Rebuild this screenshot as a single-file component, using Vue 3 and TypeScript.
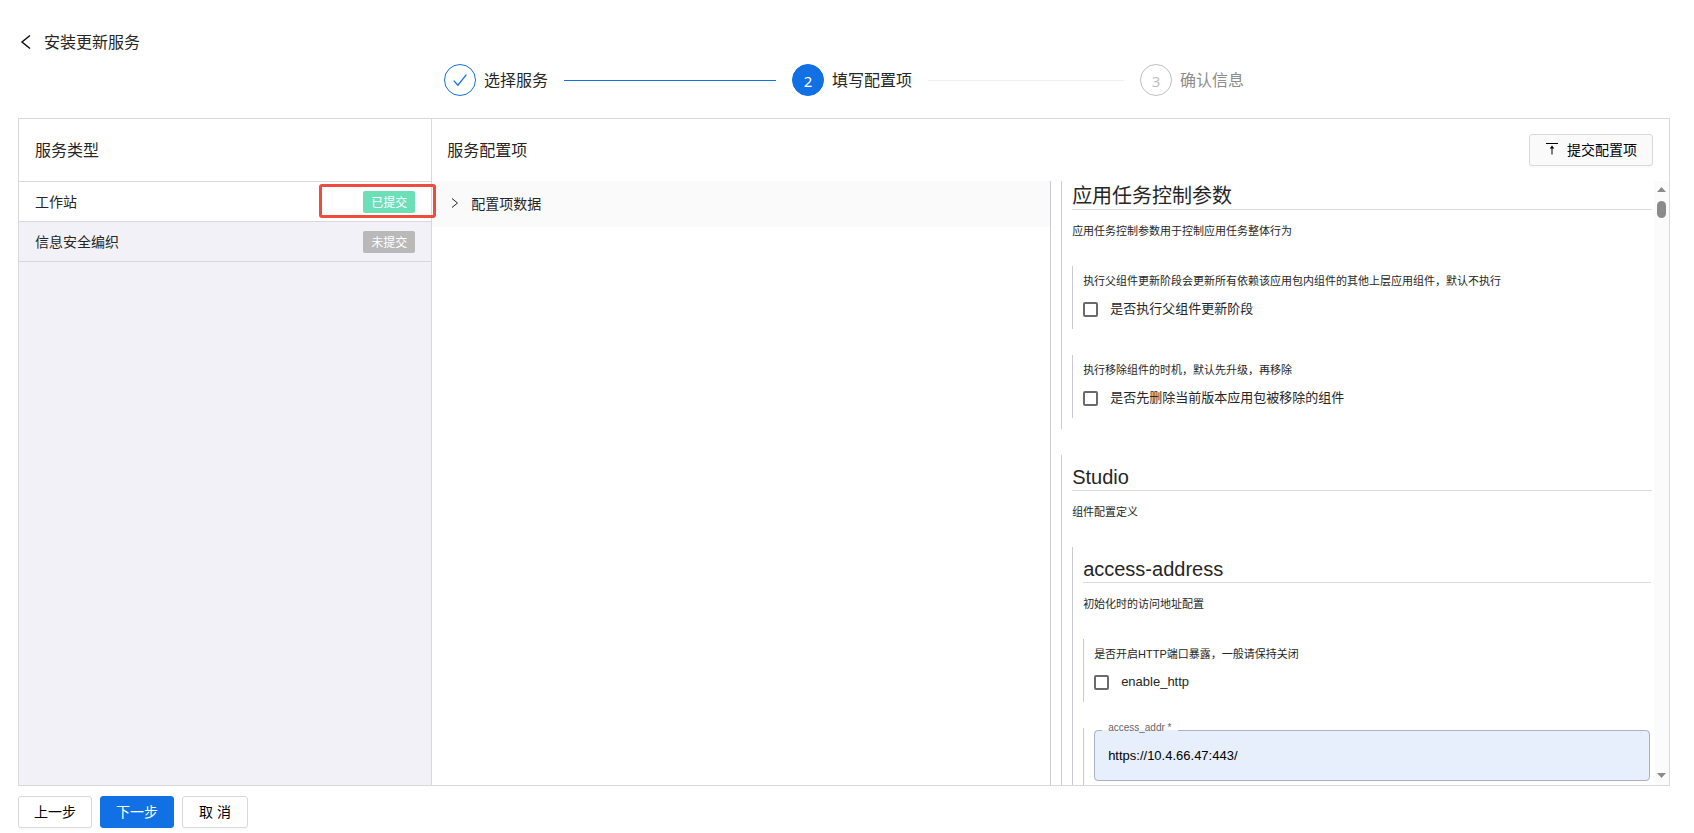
<script setup lang="ts">
import { ref } from 'vue'

type StepState = 'done' | 'active' | 'wait'

interface Step {
  title: string
  state: StepState
}

interface Service {
  name: string
  submitted: boolean
}

interface Toggle {
  id: string
  hint: string
  label: string
  checked: boolean
}

const steps: Step[] = [
  { title: '选择服务', state: 'done' },
  { title: '填写配置项', state: 'active' },
  { title: '确认信息', state: 'wait' },
]

const services: Service[] = [
  { name: '工作站', submitted: true },
  { name: '信息安全编织', submitted: false },
]

const current = ref(0)

const toggles = ref<Toggle[]>([
  {
    id: 'update-parent',
    hint: '执行父组件更新阶段会更新所有依赖该应用包内组件的其他上层应用组件，默认不执行',
    label: '是否执行父组件更新阶段',
    checked: false,
  },
  {
    id: 'remove-first',
    hint: '执行移除组件的时机，默认先升级，再移除',
    label: '是否先删除当前版本应用包被移除的组件',
    checked: false,
  },
])

const enableHttp = ref(false)
const accessAddr = ref('https://10.4.66.47:443/')
</script>

<template>
  <div class="page">
    <header class="page-head">
      <button class="back" type="button" aria-label="返回">
        <svg width="12" height="16" viewBox="0 0 12 16"><path d="M10 1.5 2 8l8 6.5" /></svg>
      </button>
      <h1>安装更新服务</h1>
    </header>

    <ol class="steps">
      <li v-for="(step, i) in steps" :key="step.title" class="step" :class="step.state">
        <span class="step-icon">
          <svg v-if="step.state === 'done'" width="16" height="16" viewBox="0 0 16 16">
            <path d="M1.7 8.6 5.9 13.2 14.4 2.6" />
          </svg>
          <template v-else>{{ i + 1 }}</template>
        </span>
        <span class="step-title">{{ step.title }}</span>
        <span v-if="i < steps.length - 1" class="step-line"></span>
      </li>
    </ol>

    <main class="panel">
      <aside class="side">
        <div class="side-head"><h2>服务类型</h2></div>
        <button
          v-for="(service, i) in services"
          :key="service.name"
          class="service"
          :class="{ selected: i === current }"
          type="button"
          @click="current = i"
        >
          <span class="service-name">{{ service.name }}</span>
          <span class="tag" :class="{ ok: service.submitted }">{{ service.submitted ? '已提交' : '未提交' }}</span>
          <span v-if="service.submitted" class="mark"></span>
        </button>
      </aside>

      <section class="config">
        <div class="config-head">
          <h2>服务配置项</h2>
          <button class="btn submit" type="button">
            <svg width="14" height="14" viewBox="0 -1 14 14">
              <path class="bar" d="M1 0.5h12" />
              <path class="stem" d="M7 4v7.5" />
              <path class="tip" d="M7 2.5 9.3 5.5H4.7z" />
            </svg>
            提交配置项
          </button>
        </div>

        <div class="config-body">
          <div class="collapse">
            <button class="collapse-head" type="button" aria-expanded="false">
              <svg width="8" height="12" viewBox="0 0 8 12"><path d="M1 1.5 6.5 6 1 10.5" /></svg>
              配置项数据
            </button>
          </div>

          <div class="form-pane">
            <form class="form" @submit.prevent>
              <section class="node">
                <h3>应用任务控制参数</h3>
                <p class="desc">应用任务控制参数用于控制应用任务整体行为</p>
                <div v-for="toggle in toggles" :key="toggle.id" class="node field">
                  <p class="hint">{{ toggle.hint }}</p>
                  <div class="check">
                    <input :id="toggle.id" v-model="toggle.checked" type="checkbox" />
                    <label :for="toggle.id">{{ toggle.label }}</label>
                  </div>
                </div>
              </section>

              <section class="node">
                <h3>Studio</h3>
                <p class="desc">组件配置定义</p>
                <section class="node">
                  <h3>access-address</h3>
                  <p class="desc">初始化时的访问地址配置</p>
                  <div class="node field">
                    <p class="hint">是否开启HTTP端口暴露，一般请保持关闭</p>
                    <div class="check">
                      <input id="enable-http" v-model="enableHttp" type="checkbox" />
                      <label for="enable-http">enable_http</label>
                    </div>
                  </div>
                  <div class="node field">
                    <fieldset class="outlined">
                      <legend><label for="access-addr">access_addr *</label></legend>
                      <input id="access-addr" v-model="accessAddr" type="text" required />
                    </fieldset>
                  </div>
                </section>
              </section>
            </form>
            <div class="scrollbar" aria-hidden="true">
              <svg width="9" height="5" viewBox="0 0 9 5"><path d="M4.5 0 9 5H0z" /></svg>
              <span class="thumb"></span>
              <svg class="down" width="9" height="5" viewBox="0 0 9 5"><path d="M0 0h9L4.5 5z" /></svg>
            </div>
          </div>
        </div>
      </section>
    </main>

    <footer class="actions">
      <button class="btn" type="button">上一步</button>
      <button class="btn primary" type="button">下一步</button>
      <button class="btn cancel" type="button">取 消</button>
    </footer>
  </div>
</template>

<style>
body {
  margin: 0;
  background: #fff;
}
</style>

<style scoped>
.page {
  box-sizing: border-box;
  display: flex;
  flex-direction: column;
  height: 100vh;
  padding: 30px 24px 5px 18px;
  font-family: 'Liberation Sans', 'Noto Sans CJK SC', sans-serif;
  font-size: 14px;
  color: #262626;
}

button,
input {
  font: inherit;
  color: inherit;
}

button {
  cursor: pointer;
}

svg {
  display: block;
  flex: none;
  fill: none;
  stroke: currentColor;
}

h1,
h2,
h3,
p {
  margin: 0;
  font-weight: 400;
}

h1,
h2 {
  padding-top: 2px;
  font-size: 16px;
  line-height: 22px;
}

.page-head {
  display: flex;
  align-items: center;
  gap: 12px;
}

.back {
  padding: 0 0 0 2px;
  border: 0;
  background: none;
}

.back svg {
  stroke-width: 1.5;
  color: #111;
}

.steps {
  display: flex;
  box-sizing: border-box;
  width: 100%;
  max-width: 800px;
  margin: 10px auto 22px;
  padding: 0;
  list-style: none;
}

.step {
  display: flex;
  flex: 1;
  align-items: center;
}

.step:last-child {
  flex: none;
}

.step-icon {
  display: flex;
  box-sizing: border-box;
  align-items: center;
  justify-content: center;
  width: 32px;
  height: 32px;
  margin-right: 8px;
  border: 1px solid #1170e4;
  border-radius: 50%;
  font-family: 'Noto Sans', sans-serif;
  font-size: 15px;
  color: #1170e4;
}

.step-icon svg {
  stroke-width: 1.3;
}

.active .step-icon {
  padding-top: 2px;
  background: #1170e4;
  color: #fff;
}

.wait .step-icon {
  padding-top: 2px;
  border-color: #bfbfbf;
  color: #bfbfbf;
}

.step-title {
  padding-top: 2px;
  font-size: 16px;
  line-height: 30px;
}

.wait .step-title {
  color: #8c8c8c;
}

.step-line {
  flex: 1;
  height: 1px;
  margin: 1px 16px 0;
  background: #f0f0f0;
}

.done .step-line {
  background: #1170e4;
}

.panel {
  display: flex;
  flex: 1;
  min-height: 0;
  border: 1px solid #d9d9d9;
}

.side {
  flex: 1;
  border-right: 1px solid #d9d9d9;
  background: #f2f1f7;
}

.side-head {
  padding: 19px 16px;
  border-bottom: 1px solid #d9d9d9;
  background: #fff;
}

.service {
  position: relative;
  display: flex;
  box-sizing: border-box;
  align-items: center;
  justify-content: space-between;
  width: 100%;
  height: 40px;
  padding: 0 16px;
  border: 0;
  border-bottom: 1px solid #d9d9d9;
  background: none;
}

.service-name {
  padding-bottom: 2px;
}

.service.selected {
  background: #fff;
}

.tag {
  padding: 2px 8px 0;
  border-radius: 2px;
  background: #b9b9b9;
  font-size: 12px;
  line-height: 20px;
  color: #fff;
}

.tag.ok {
  background: #6cdfb9;
}

.mark {
  position: absolute;
  top: 2px;
  right: -5px;
  z-index: 1;
  box-sizing: border-box;
  width: 117px;
  height: 34px;
  border: 3px solid #f04b3f;
  border-radius: 3px;
}

.config {
  display: flex;
  flex: 3;
  flex-direction: column;
  min-width: 0;
}

.config-head {
  display: flex;
  align-items: center;
  justify-content: space-between;
  padding: 15px 16px 15px 15px;
}

.config-body {
  display: flex;
  flex: 1;
  min-height: 0;
}

.collapse,
.form-pane {
  flex: 1;
  min-width: 0;
}

.collapse-head {
  display: flex;
  box-sizing: border-box;
  align-items: center;
  gap: 12px;
  width: 100%;
  height: 46px;
  padding: 0 19px 2px;
  border: 0;
  background: #fafafa;
}

.form-pane {
  display: flex;
  overflow: hidden;
  border-left: 1px solid #cbcad4;
}

.form {
  flex: 1;
  min-width: 0;
  padding: 0 1px 0 10px;
}

.node {
  margin-bottom: 26px;
  padding: 0 1px 11px 10px;
  border-left: 1px solid #cbcad4;
}

.node > .node:last-child {
  margin-bottom: 0;
}

h3 {
  padding-top: 9px;
  border-bottom: 1px solid #dcdcdf;
  font-size: 20px;
  line-height: 26px;
}

.form > .node:first-child > h3 {
  padding-top: 2px;
}

.desc,
.hint {
  font-size: 11px;
  line-height: 16px;
}

.desc {
  margin: 13px 0 27px;
}

.node.field {
  display: flow-root;
  padding-bottom: 8px;
}

.hint {
  padding: 7px 0 8px;
}

.check {
  display: flex;
  align-items: center;
  gap: 12px;
  font-size: 13px;
  line-height: 24px;
}

.check input {
  appearance: none;
  box-sizing: border-box;
  flex: none;
  width: 15px;
  height: 15px;
  margin: 0;
  border: 2px solid #6b6b6b;
  border-radius: 2px;
  background: #fff;
}

.check input:checked {
  background: #1170e4;
}

.outlined {
  min-width: 0;
  margin: -6px 0 0;
  padding: 0 7px;
  border: 1px solid #a9b1c3;
  border-radius: 4px;
  background: #e7effd;
}

.outlined legend {
  height: 16px;
  padding: 0 6px;
  font-size: 10px;
  line-height: 12px;
  color: #666;
}

.outlined legend label {
  display: block;
}

.outlined input {
  display: block;
  box-sizing: border-box;
  width: 100%;
  height: 42px;
  padding: 0 6px 7px;
  border: 0;
  background: none;
  outline: none;
  font-size: 13px;
  color: #000;
}

.scrollbar {
  display: flex;
  flex-direction: column;
  align-items: center;
  width: 15px;
  padding: 6px 0 7px;
  box-sizing: border-box;
  background: #fbfbfb;
}

.scrollbar svg {
  fill: #8b8b8b;
  stroke: none;
}

.thumb {
  width: 9px;
  height: 17px;
  margin-top: 9px;
  border-radius: 5px;
  background: #8b8b8b;
}

.down {
  margin-top: auto;
}

.actions {
  display: flex;
  gap: 8px;
  margin-top: 10px;
}

.btn {
  display: flex;
  box-sizing: border-box;
  align-items: center;
  justify-content: center;
  gap: 8px;
  height: 32px;
  padding: 0 15px 2px;
  border: 1px solid #d9d9d9;
  border-radius: 3px;
  background: #fff;
  box-shadow: 0 2px 0 rgba(0, 0, 0, 0.02);
  color: #000;
}

.btn.primary {
  border-color: #1170e4;
  background: #1170e4;
  color: #fff;
}

.btn.cancel {
  min-width: 66px;
}

.btn.submit {
  background: #fafafa;
}

.submit .tip {
  fill: currentColor;
  stroke: none;
}
</style>
